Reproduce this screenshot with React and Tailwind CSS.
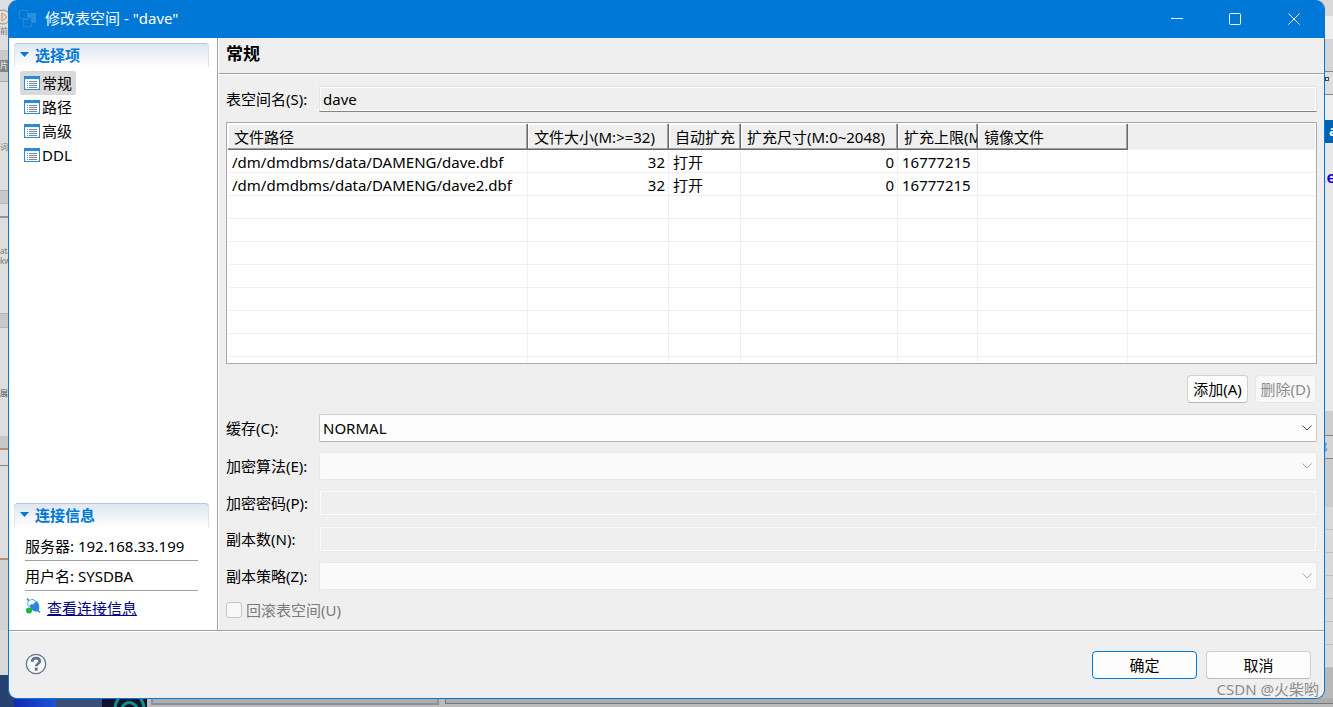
import React from 'react';
import clsx from 'clsx';

const navItems = ['常规', '路径', '高级', 'DDL'];

const columns = [
  { title: '文件路径', width: 'w-[300px]' },
  { title: '文件大小(M:>=32)', width: 'w-[141px]', right: true },
  { title: '自动扩充', width: 'w-[72px]' },
  { title: '扩充尺寸(M:0~2048)', width: 'w-[157px]', right: true },
  { title: '扩充上限(M)', width: 'w-20' },
  { title: '镜像文件', width: 'w-[150px]' }
];

const files = [
  ['/dm/dmdbms/data/DAMENG/dave.dbf', '32', '打开', '0', '16777215', ''],
  ['/dm/dmdbms/data/DAMENG/dave2.dbf', '32', '打开', '0', '16777215', '']
];

const EMPTY_ROWS = 7;

const AppIcon = () => (
  <svg width="20" height="20" viewBox="0 0 20 20">
    <path d="M10 4h8v10h-5V9h-3z" fill="#2b8fe0" />
    <rect x="1.5" y="1.5" width="8" height="8" fill="none" stroke="#1f88de" />
    <rect x="5.5" y="10.5" width="8" height="7" fill="#0078d7" stroke="#1f88de" />
  </svg>
);

const ListIcon = () => (
  <svg width="16" height="14" viewBox="0 0 16 14" className="shrink-0">
    <rect x="0.5" y="0.5" width="15" height="13" fill="#fff" stroke="#2b88d8" />
    <rect width="16" height="3" fill="#2b88d8" />
    <path d="M3 5.5h1M3 7.5h1M3 9.5h1M3 11.5h1M5 5.5h8M5 7.5h8M5 9.5h8M5 11.5h8" stroke="#7285a5" />
  </svg>
);

const PlugIcon = () => (
  <svg width="16" height="18" viewBox="0 0 16 18">
    <path d="M2 0.500l2 2.500M15 14.500l-3-3" stroke="#2b88d8" strokeWidth="1.500" />
    <path d="M3 7.500C2 3.500 4 1.500 8 1.500l3 2-5 5z" fill="#fff" stroke="#5b9fdc" />
    <path d="M4.500 8L7 5.500 8 7l3.500-4c3 2.500 3.500 6.500 2 10-3 1.500-7 0-9-5z" fill="#2b88d8" />
    <circle cx="4" cy="12.500" r="3" fill="#22b33a" />
  </svg>
);

const HelpIcon = () => (
  <svg width="22" height="22" viewBox="0 0 22 22">
    <circle cx="11" cy="11" r="9.700" fill="#f8f8f8" stroke="#5f7391" strokeWidth="1.300" />
    <path
      d="M7.200 8.800C7.200 6.300 9 5.200 11 5.200s3.700 1.100 3.700 3c0 2.500-3.400 2.600-3.400 5"
      fill="none"
      stroke="#5f7391"
      strokeWidth="2.700"
    />
    <rect x="9.800" y="14.700" width="2.900" height="2.900" fill="#5f7391" />
  </svg>
);

const Chevron = ({ disabled }) => (
  <svg
    width="10"
    height="6"
    viewBox="0 0 10 6"
    fill="none"
    className={clsx(
      'pointer-events-none absolute right-[5px] top-[11px]',
      disabled ? 'stroke-[#a8a8a8]' : 'stroke-[#454545]'
    )}
  >
    <path d="M0.500 0.500L5 5l4.500-4.500" />
  </svg>
);

const SectionHeader = ({ children }) => (
  <h2 className="mr-2 ml-[5px] flex h-6 items-center gap-1.5 rounded-t-sm border-t border-[#b4c7dc] bg-linear-to-b from-[#dfe6f2] to-white px-1.5 pb-0.5 text-[15px] font-bold text-[#0078d7] shadow-[inset_1px_0_0_#dbe4ef,inset_-1px_0_0_#dbe4ef]">
    <svg width="9" height="5" viewBox="0 0 9 5">
      <path d="M0 0h9L4.500 5z" fill="#0078d7" />
    </svg>
    {children}
  </h2>
);

const Field = ({ id, label, children }) => (
  <div className="flex items-center">
    <label htmlFor={id} className="w-[93px] shrink-0">{label}</label>
    {children}
  </div>
);

const SelectField = ({ id, label, value, disabled }) => (
  <Field id={id} label={label}>
    <div className="relative flex-1">
      <select
        id={id}
        disabled={disabled}
        className={clsx(
          'block h-7 w-full appearance-none rounded-xs border px-[3px]',
          disabled ? 'border-[#e8e8e8] bg-[#fafafa]' : 'border-[#cccccc] border-b-[#b5b5b5] bg-[#fdfdfd]'
        )}
      >
        <option>{value}</option>
      </select>
      <Chevron disabled={disabled} />
    </div>
  </Field>
);

const TextField = ({ id, label, value, disabled }) => (
  <Field id={id} label={label}>
    <input
      id={id}
      type="text"
      defaultValue={value}
      readOnly
      disabled={disabled}
      className={clsx(
        'h-[26px] min-w-0 flex-1 border bg-[#efefef] px-[3px]',
        disabled
          ? 'border-[#ececec] shadow-[inset_0_0_0_1px_#fbfbfb]'
          : 'border-[#e5e5e5] border-b-[#858585] shadow-[inset_0_0_0_1px_#fbfbfb]'
      )}
    />
  </Field>
);

const FileTable = () => (
  <div className="overflow-hidden border border-[#a5a8ad] bg-white p-px">
    <table className="w-full table-fixed border-separate border-spacing-0">
      <thead>
        <tr className="h-[26px] bg-[#efefef]">
          {columns.map((col) => (
            <th
              key={col.title}
              className={clsx(
                'overflow-hidden border-r border-b border-[#696969] p-0 pl-1.5 text-left font-normal whitespace-nowrap shadow-[inset_-1px_-1px_0_#a0a0a0,inset_1px_1px_0_#ffffff]',
                col.width
              )}
            >
              {col.title}
            </th>
          ))}
          <th className="p-0" />
        </tr>
      </thead>
      <tbody>
        {[...files, ...Array(EMPTY_ROWS).fill([])].map((row, i) => (
          <tr key={i} className="h-[23px]">
            {columns.map((col, j) => (
              <td
                key={col.title}
                className={clsx(
                  'border-r border-b border-[#efefef] p-0 pt-0.5 leading-5 whitespace-nowrap',
                  col.right ? 'pr-[3px] text-right' : 'pl-1'
                )}
              >
                {row[j]}
              </td>
            ))}
            <td className="border-b border-[#efefef] p-0" />
          </tr>
        ))}
        <tr className="h-[5px]">
          {columns.map((col) => (
            <td key={col.title} className="border-r border-[#efefef] p-0" />
          ))}
          <td className="p-0" />
        </tr>
      </tbody>
    </table>
  </div>
);

// Edges of the windows that lie behind the dialog
const Backdrop = () => (
  <div aria-hidden="true" className="absolute inset-0 flex flex-col overflow-hidden bg-[#d6d6d6]">
    <div className="flex min-h-0 flex-1 justify-between">
      <div className="flex w-5 flex-col overflow-hidden bg-[#dedede] text-[8px] leading-[10px] text-[#777777]">
        <div className="h-[50px] pt-2">
          <svg width="9" height="18" viewBox="0 0 9 18" fill="none">
            <circle cx="3" cy="9" r="7" stroke="#8e8e8e" />
            <path d="M2 5l5 4-5 4z" stroke="#d98c5f" />
          </svg>
          前
        </div>
        <div className="h-[10px] bg-[#c9c9c9]" />
        <div className="h-3 bg-[#858585] text-white">片</div>
        <div className="h-[10px] border-b border-[#aaaaaa] bg-[#cccccc]" />
        <div className="h-[108px] pt-[60px]">词</div>
        <div className="h-[14px] border-y border-[#b5b5b5] bg-[#c8c8c8]" />
        <div className="h-[14px] border-b-2 border-[#92959b]" />
        <div className="h-[95px] pt-7">ata/<br />kw/</div>
        <div className="h-[15px] border-y border-[#b5b5b5] bg-[#c8c8c8]" />
        <div className="h-[108px] pt-[60px] text-[#555555]">展</div>
        <div className="h-[14px] border-b-2 border-[#bf8d72] bg-[#c8c8c8]" />
        <div className="h-4 border-b border-[#85858c]" />
        <div className="h-[94px] border-b-2 border-[#bb8c78]" />
        <div className="h-[70px] bg-[#d2d2d2]" />
        <div className="h-[45px] bg-[#d8d8d8]" />
        <div className="flex-1 bg-[#26406f]" />
      </div>
      <div className="flex w-5 flex-col overflow-hidden bg-[#d9d9d9]">
        <div className="h-4 bg-[#d8d8d8]" />
        <div className="h-[23px] bg-[#eeeeee]" />
        <div className="h-8 bg-[#d5d5d5]" />
        <div className="h-6 border-y border-[#858585] bg-[#dddddd] pt-[5px] pl-3">
          <div className="size-1 border border-[#444444]" />
        </div>
        <div className="h-[25px] bg-[#eeeeee]" />
        <div className="h-[23px] bg-[#0063b1] pl-4 font-bold text-white">a</div>
        <div className="h-[268px] bg-[#e8e8e8] pt-6 pl-1 font-['Liberation_Mono'] text-[16px] leading-6 font-bold text-[#1500d0]">te</div>
        <div className="h-6 bg-[#cecece]" />
        <div className="h-6 border-y border-[#858585] bg-[#d4d4d4] pl-1.5 text-[#4a90cf]">8</div>
        <div className="h-12 bg-[#cbcbcb]" />
        {[0, 1, 2, 3, 4, 5, 6].map((n) => (
          <div key={n} className="h-[23px] border-b border-[#c2c2c2]" />
        ))}
        <div className="flex-1 bg-[#b8b8b8]" />
      </div>
    </div>
    <div className="flex h-[9px] bg-[#bcbcbc]">
      <div className="w-[14px] bg-[#26406f]" />
      <div className="w-[42px] bg-linear-to-r from-[#1428b4] to-[#1f52d6]" />
      <div className="w-[46px] bg-[#3a4e78]" />
      <div className="w-[45px] bg-[#10122e]">
        <svg width="45" height="9" viewBox="0 0 45 9" fill="none" stroke="#0e9183" strokeWidth="3">
          <path d="M13 9Q14 3 17 0M42 9Q41 3 38 0M20 9Q27 0 35 9" />
        </svg>
      </div>
      <div className="ml-1 h-[7px] w-[288px] border-x-2 border-b-2 border-[#8492a3] bg-[#aeaeae]" />
      <div className="ml-1.5 h-1.5 flex-1 border-b border-l border-[#777777] bg-[#acacac]" />
    </div>
  </div>
);

const TitleBar = () => (
  <header className="flex h-[38px] shrink-0 items-center bg-[#0078d7] pl-[9px] text-white">
    <AppIcon />
    <h1 className="ml-[7px] flex-1 pb-0.5 text-[15px]">修改表空间 - "dave"</h1>
    <button type="button" aria-label="最小化" className="flex h-full w-[59px] items-center justify-center">
      <svg width="12" height="12" viewBox="0 0 12 12" stroke="#fff"><path d="M0 5.500h12" /></svg>
    </button>
    <button type="button" aria-label="最大化" className="flex h-full w-[58px] items-center justify-center">
      <svg width="12" height="12" viewBox="0 0 12 12" fill="none" stroke="#fff"><rect x="0.500" y="0.500" width="11" height="11" rx="1" /></svg>
    </button>
    <button type="button" aria-label="关闭" className="flex h-full w-[60px] items-center justify-center">
      <svg width="12" height="12" viewBox="0 0 12 12" stroke="#fff"><path d="M0.500 0.500l11 11M11.500 0.500l-11 11" /></svg>
    </button>
  </header>
);

const Sidebar = () => (
  <aside className="flex w-[209px] shrink-0 flex-col border-r border-[#a0a0a0] bg-white pt-[5px]">
    <SectionHeader>选择项</SectionHeader>
    <nav className="mt-1 flex flex-col items-start pl-[11px]">
      {navItems.map((item, i) => (
        <button
          key={item}
          type="button"
          className={clsx('flex h-6 items-center gap-0.5 rounded-xs px-1', i === 0 && 'bg-[#d9d9d9]')}
        >
          <ListIcon />
          {item}
        </button>
      ))}
    </nav>
    <div className="mt-auto">
      <SectionHeader>连接信息</SectionHeader>
      <div className="mr-[19px] ml-4 pt-1">
        <p className="flex h-[30px] items-center border-b border-[#a0a0a0]">服务器: 192.168.33.199</p>
        <p className="flex h-[30px] items-center border-b border-[#a0a0a0]">用户名: SYSDBA</p>
        <div className="flex h-[39px] items-start gap-1.5 pt-[7px]">
          <PlugIcon />
          <a href="#connection" className="text-[#000080] underline">查看连接信息</a>
        </div>
      </div>
    </div>
  </aside>
);

const MainPanel = () => (
  <main className="min-w-0 flex-1 border-l border-white">
    <h2 className="flex h-9 items-center border-b border-[#a0a0a0] px-[7px] pb-1 text-[17px] font-bold">常规</h2>
    <form className="flex flex-col gap-2.5 border-t border-white px-[7px] pt-[11px] pb-2.5">
      <TextField id="name" label="表空间名(S):" value="dave" />
      <FileTable />
      <div className="flex justify-end gap-[7px] py-px pr-px">
        <button type="button" className="h-7 w-[61px] rounded-sm border border-[#d0d0d0] border-b-[#b8b8b8] bg-[#fdfdfd]">
          添加(A)
        </button>
        <button type="button" disabled className="h-7 w-[61px] rounded-sm border border-[#e8e8e8] bg-[#f8f8f8] text-[#8c8c8c]">
          删除(D)
        </button>
      </div>
      <SelectField id="cache" label="缓存(C):" value="NORMAL" />
      <SelectField id="algorithm" label="加密算法(E):" value="" disabled />
      <TextField id="password" label="加密密码(P):" value="" disabled />
      <TextField id="copies" label="副本数(N):" value="" disabled />
      <SelectField id="policy" label="副本策略(Z):" value="" disabled />
      <label className="flex h-5 items-center gap-1 text-[#7a7a7a]">
        <input type="checkbox" disabled className="size-4 appearance-none rounded-[3px] border border-[#c4c4c4] bg-[#f8f8f8]" />
        回滚表空间(U)
      </label>
    </form>
  </main>
);

const App = () => (
  <div className="relative min-h-screen px-2 pb-2 font-['Noto_Sans','Noto_Sans_CJK_SC',sans-serif] text-[15px] leading-5 text-black">
    <Backdrop />
    <div
      role="dialog"
      className="relative flex min-h-[calc(100vh-8px)] flex-col overflow-hidden rounded-[9px] border border-t-0 border-[#0078d7] bg-[#efefef]"
    >
      <TitleBar />
      <div className="flex flex-1">
        <Sidebar />
        <MainPanel />
      </div>
      <footer className="flex h-17 shrink-0 items-center border-t border-[#a0a0a0] pr-[13px] pl-4 shadow-[inset_0_1px_0_#ffffff]">
        <button type="button" aria-label="帮助" className="pb-0.5"><HelpIcon /></button>
        <button type="button" className="ml-auto h-7 w-[105px] rounded-sm border border-[#0078d7] bg-[#fdfdfd]">
          确定
        </button>
        <button type="button" className="ml-[9px] h-7 w-[105px] rounded-sm border border-[#d0d0d0] border-b-[#b8b8b8] bg-[#fdfdfd]">
          取消
        </button>
      </footer>
    </div>
    <span className="absolute right-3.5 bottom-2 text-[15px] text-[#8c8c8c]">CSDN @火柴哟</span>
  </div>
);

export default App;
